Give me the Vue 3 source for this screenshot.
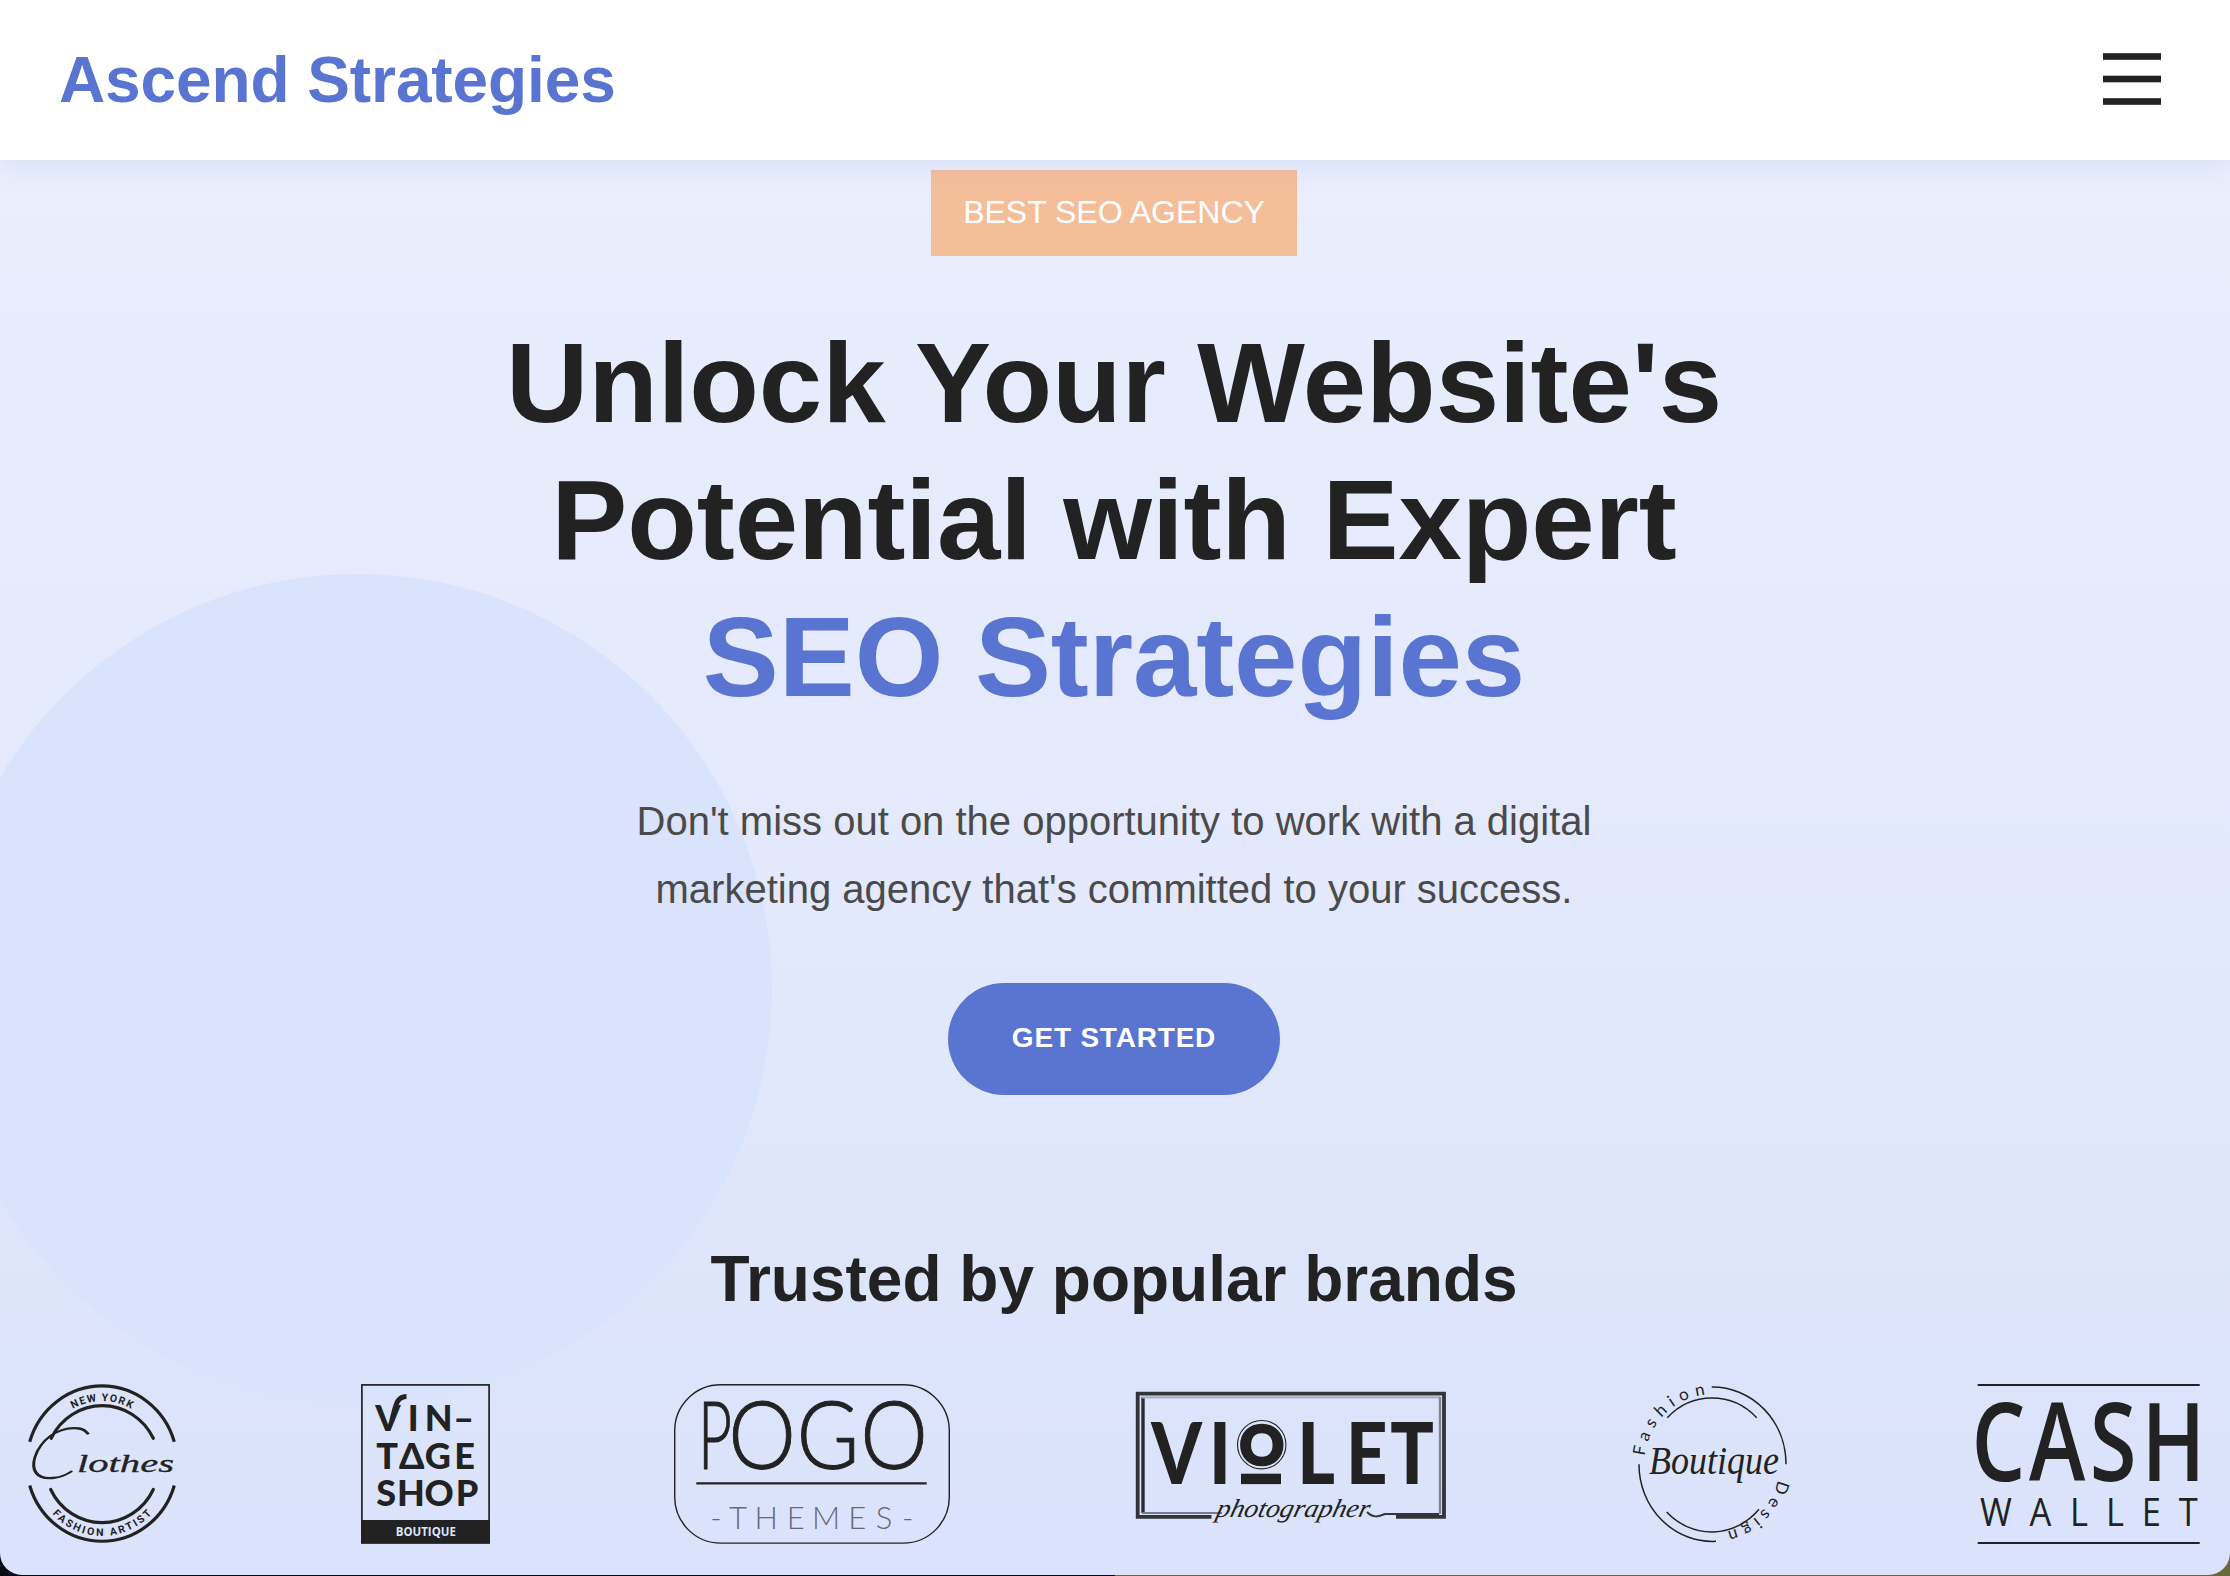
<script setup>
const heroLines = ["Unlock Your Website's", 'Potential with Expert']
const ink = '#222222'
</script>

<template>
  <div class="page">
    <header class="header">
      <a class="brand">Ascend Strategies</a>
      <svg class="menu" viewBox="0 0 58 52" width="58" height="52" aria-label="Menu">
        <rect x="0" y="0.2" width="58" height="6.6" />
        <rect x="0" y="22.7" width="58" height="6.6" />
        <rect x="0" y="45.2" width="58" height="6.6" />
      </svg>
    </header>

    <main class="hero">
      <div class="circle"></div>
      <span class="badge">BEST SEO AGENCY</span>
      <h1 class="title">
        <span v-for="line in heroLines" :key="line">{{ line }}</span>
        <span class="accent">SEO Strategies</span>
      </h1>
      <p class="lead">
        Don't miss out on the opportunity to work with a digital<br />
        marketing agency that's committed to your success.
      </p>
      <button class="cta">GET STARTED</button>

      <h2 class="trusted">Trusted by popular brands</h2>
      <div class="logos">
        <!-- Clothes -->
        <svg width="148" height="160" viewBox="0 0 148 160" :fill="ink">
          <defs>
            <path id="ny" d="M14 80A60 63 0 0 1 134 80" />
            <path id="fa" d="M5 80A69 72 0 0 0 143 80" />
          </defs>
          <g fill="none" :stroke="ink" stroke-width="3.2">
            <path d="M1.7 57.7A75.5 78.3 0 0 1 146.3 57.7M1.7 101.5A75.5 78.3 0 0 0 146.3 101.5" />
            <path d="M23.2 54.3A57 58.7 0 0 1 125.3 54.3M22.7 105.5A57 58.7 0 0 0 125.3 105.5" stroke-linecap="round" />
          </g>
          <text class="tiny" text-anchor="middle"><textPath href="#ny" startOffset="50%" textLength="61">NEW YORK</textPath></text>
          <text class="tiny" text-anchor="middle"><textPath href="#fa" startOffset="50%" textLength="112">FASHION ARTIST</textPath></text>
          <g transform="translate(-6 94) skewX(-18)">
            <text class="bigc" x="0" y="0" textLength="53" lengthAdjust="spacingAndGlyphs">C</text>
          </g>
          <text class="lothes" x="49" y="88" textLength="97" lengthAdjust="spacingAndGlyphs">lothes</text>
        </svg>

        <!-- Vintage Shop -->
        <svg width="129" height="160" viewBox="0 0 129 160" :fill="ink">
          <rect x="0.9" y="0.9" width="127.2" height="158" fill="none" :stroke="ink" stroke-width="1.7" />
          <rect x="0" y="136" width="129" height="23.5" />
          <path d="M31 36C35 20 36 12.500 45.500 12.500" fill="none" :stroke="ink" stroke-width="5" />
          <text class="vintage" y="47.3" x="27 52.2 77.8 102.7">VIN–</text>
          <text class="vintage" y="85" x="26 50.7 76.8 103.5">TΔGE</text>
          <text class="vintage" y="122" x="25.2 50 78 106">SHOP</text>
          <text class="boutique-label" x="64.8" y="152" textLength="60" lengthAdjust="spacingAndGlyphs">BOUTIQUE</text>
        </svg>

        <!-- Pogo Themes -->
        <svg width="276" height="160" viewBox="0 0 276 160" :fill="ink">
          <rect x="0.7" y="0.7" width="274.6" height="158.4" rx="46" fill="none" :stroke="ink" stroke-width="1.4" />
          <g class="pogo">
            <text transform="scale(.62 1)" y="84.500" x="66">P</text>
            <text transform="scale(.9 1)" y="84.500" x="98 171 244.500">OGO</text>
          </g>
          <path d="M22.3 99.4H252.7" :stroke="ink" stroke-width="2.4" />
          <text class="themes" y="145" x="42 64 92.3 121.7 152 183.3 210 233.7">-THEMES-</text>
        </svg>

        <!-- Violet photographer -->
        <svg width="312" height="160" viewBox="0 0 312 160" :fill="ink">
          <path d="M76.5 132.8H2.7V9.7H309V132.8H261" fill="none" stroke="#33343a" stroke-width="3.8" />
          <path d="M8 13V129" stroke="#2b2c31" stroke-width="3.4" />
          <path d="M7 13.4H305" stroke="#a9afc4" stroke-width="2.2" />
          <path d="M305 13V130" stroke="#81869a" stroke-width="2.4" />
          <path d="M7 129H87" stroke="#757a8a" stroke-width="2.2" />
          <path d="M232 128C238 134 243 133 250 130H304" fill="none" stroke="#33343a" stroke-width="2" />
          <text class="violet" transform="scale(.84 1)" y="100" x="49.6 101.200">VI</text>
          <text class="small-o" x="126.7" y="81.300">O</text>
          <text class="violet" transform="scale(.84 1)" y="100" x="215.500 276 329.800">LET</text>
          <circle cx="126.7" cy="60.7" r="24.2" fill="none" :stroke="ink" stroke-width="1.1" />
          <rect x="106" y="89.7" width="40" height="10.4" />
          <g transform="translate(80 133) skewX(-14)">
            <text class="photo" textLength="153" lengthAdjust="spacingAndGlyphs">photographer</text>
          </g>
        </svg>

        <!-- Fashion Boutique Design -->
        <svg width="161" height="160" viewBox="0 0 161 160" :fill="ink">
          <defs>
            <path id="fashion" d="M13.7 72A68.5 70 0 0 1 78 10.3" />
            <path id="design" d="M146.9 96A67 68.5 0 0 1 92 148" />
          </defs>
          <g fill="none" :stroke="ink" stroke-width="1.5">
            <path d="M80.7 3A73.5 77 0 0 1 155 80.3M8 80.3A73.5 77 0 0 0 85 157.3" />
            <path d="M36.3 33.7A63 66.5 0 0 1 125.7 33.7M35.7 128A63 66.5 0 0 0 128 125.3" />
          </g>
          <text class="ring"><textPath href="#fashion" textLength="93">Fashion</textPath></text>
          <text class="ring"><textPath href="#design" textLength="76">Design</textPath></text>
          <text class="script" x="18" y="89.5" textLength="130" lengthAdjust="spacingAndGlyphs">Boutique</text>
        </svg>

        <!-- Cash Wallet -->
        <svg width="223" height="160" viewBox="0 0 223 160" :fill="ink">
          <path d="M.7 1H222.7M.7 159H222.7" :stroke="ink" stroke-width="1.9" />
          <text class="cash" transform="scale(.78 1)" y="96.7" x="27.500 102.800 174.400 252">CASH</text>
          <text class="wallet" transform="scale(.92 1)" y="141.7" x="20.700 68.800 111 150 189.500 229.700">WALLET</text>
        </svg>
      </div>
    </main>
  </div>
</template>

<style>
html {
  background: linear-gradient(90deg, #050c14 50%, #6b693a 50%);
}
body {
  margin: 0;
}
</style>

<style scoped>
.page {
  box-sizing: border-box;
  position: relative;
  height: 1575px;
  overflow: hidden;
  border-radius: 0 0 22px 22px;
  background: linear-gradient(180deg, #ebeefd 160px, #e7edfc 290px, #e6eafd 620px, #e2e8fc 1000px, #dfe6fb 1200px, #dce4fb 1400px, #dbe2fc 1575px);
  font-family: "Liberation Sans", Arial, sans-serif;
  color: #222;
}
.header {
  box-sizing: border-box;
  position: relative;
  z-index: 2;
  display: flex;
  align-items: center;
  justify-content: space-between;
  height: 160px;
  padding: 0 69.5px 0 59px;
  background: #fff;
  box-shadow: 0 0 30px rgba(90, 115, 209, 0.18);
}
.brand {
  font-size: 64px;
  font-weight: 700;
  line-height: 64px;
  letter-spacing: -0.1px;
  color: #5a74d1;
}
.menu {
  display: block;
  margin-top: -2px;
  fill: #222;
}
.hero {
  display: flex;
  flex-direction: column;
  align-items: center;
  padding: 10px 2px 0 0;
}
.hero > :not(.circle) {
  position: relative;
}
.circle {
  position: absolute;
  left: -58px;
  top: 574px;
  width: 830px;
  height: 830px;
  border-radius: 50%;
  background: #d9e3fc;
}
.badge {
  width: 366px;
  height: 86px;
  background: #f5be9b;
  color: #fff;
  font-size: 32px;
  line-height: 85px;
  text-align: center;
}
.title {
  margin: 58px 0 0;
  font-size: 114px;
  font-weight: 700;
  line-height: 137px;
  letter-spacing: -0.1px;
  text-align: center;
}
.title span {
  display: block;
}
.title .accent {
  color: #5a74d1;
}
.lead {
  margin: 62px 0 0;
  font-size: 40px;
  line-height: 68px;
  text-align: center;
  color: #4a4a4a;
}
.cta {
  width: 332px;
  height: 112px;
  margin: 60px 0 0;
  padding: 0 0 2px;
  border: 0;
  border-radius: 56px;
  background: #5a74d1;
  color: #fff;
  font: 700 28px "Liberation Sans", Arial, sans-serif;
  letter-spacing: 0.8px;
}
.trusted {
  margin: 146px 0 0;
  font-size: 64px;
  font-weight: 700;
  line-height: 77px;
}
.logos {
  box-sizing: border-box;
  display: flex;
  justify-content: space-between;
  width: 2228px;
  margin-top: 66px;
  padding: 0 28px;
}
.logos svg {
  display: block;
  overflow: visible;
}
.tiny {
  font: 700 10.5px Roboto, sans-serif;
}
.bigc {
  font: italic 100 71px Lato, sans-serif;
  stroke: #222;
  stroke-width: 1.6;
}
.lothes {
  font: italic 400 25px "Liberation Serif", serif;
  stroke: #222;
  stroke-width: 0.3;
}
.vintage {
  font: 900 36px Lato, sans-serif;
  text-anchor: middle;
}
.boutique-label {
  font: 700 11.5px "Open Sans", sans-serif;
  text-anchor: middle;
  fill: #dde4fb;
}
.pogo {
  font: 300 95px Lato, sans-serif;
  text-anchor: middle;
  stroke: #222;
  stroke-width: 1;
}
.themes {
  font: 300 31px Lato, sans-serif;
  text-anchor: middle;
  fill: #666a78;
}
.violet {
  font: 900 86px Lato, sans-serif;
  text-anchor: middle;
}
.small-o {
  font: 900 55px Lato, sans-serif;
  text-anchor: middle;
  stroke: #222;
  stroke-width: 2.5;
}
.photo {
  font: italic 400 26px "Liberation Serif", serif;
}
.ring {
  font: 400 17px Lato, sans-serif;
}
.script {
  font: italic 400 39px "Liberation Serif", serif;
}
.cash {
  font: 600 109px "Open Sans", sans-serif;
  text-anchor: middle;
}
.wallet {
  font: 500 37.5px "Open Sans", sans-serif;
  text-anchor: middle;
}
</style>
